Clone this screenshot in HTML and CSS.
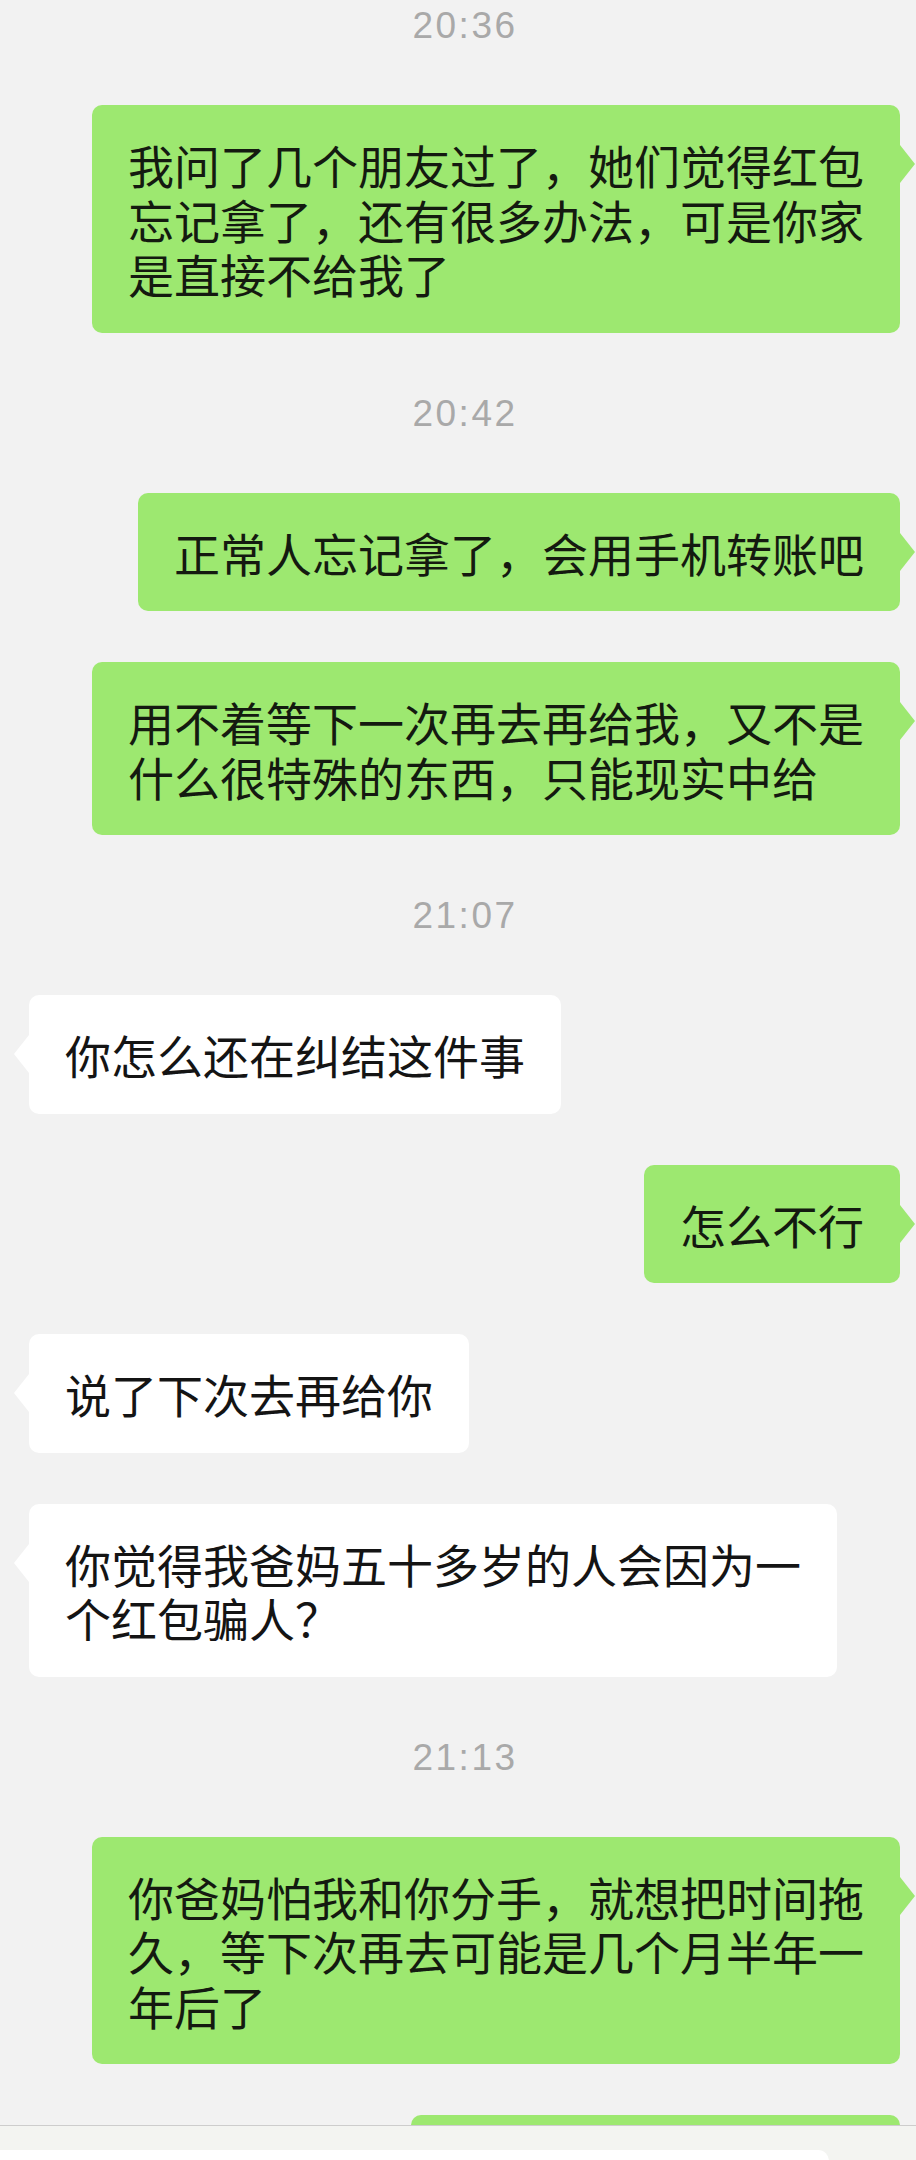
FILE: index.html
```html
<!DOCTYPE html>
<html lang="zh-CN">
<head>
    <meta charset="UTF-8">
    <meta name="viewport" content="width=device-width, initial-scale=1.0">
    <title>聊天</title>
    <link rel="stylesheet" href="styles.css">
</head>
<body>

    <div class="chat">
        <div class="time">20:36</div>
        <div class="row me">
            <div class="bubble">我问了几个朋友过了，她们觉得红包忘记拿了，还有很多办法，可是你家是直接不给我了</div>
        </div>

        <div class="time">20:42</div>
        <div class="row me">
            <div class="bubble">正常人忘记拿了，会用手机转账吧</div>
        </div>
        <div class="row me">
            <div class="bubble">用不着等下一次再去再给我，又不是什么很特殊的东西，只能现实中给</div>
        </div>

        <div class="time">21:07</div>
        <div class="row you">
            <div class="bubble">你怎么还在纠结这件事</div>
        </div>
        <div class="row me">
            <div class="bubble">怎么不行</div>
        </div>
        <div class="row you">
            <div class="bubble">说了下次去再给你</div>
        </div>
        <div class="row you">
            <div class="bubble">你觉得我爸妈五十多岁的人会因为一个红包骗人？</div>
        </div>

        <div class="time">21:13</div>
        <div class="row me">
            <div class="bubble">你爸妈怕我和你分手，就想把时间拖久，等下次再去可能是几个月半年一年后了</div>
        </div>
        <div class="row me">
            <div class="bubble cut"></div>
        </div>
    </div>

    <!-- 输入栏 -->
    <div class="bar">
        <div class="input"></div>
    </div>

</body>
</html>
```

FILE: styles.css
```css
body {
    margin: 0;
    background-color: #f2f2f2;
    font-family: "Noto Sans CJK SC", sans-serif;
}
.chat {
    display: flex;
    flex-direction: column;
    gap: 51px;
    height: 2125px;
    overflow: hidden;
    box-sizing: border-box;
}
.time {
    margin: 12px 0 10px;
    padding-left: 14px;
    font-family: "Liberation Sans", Arial, sans-serif;
    font-size: 37px;
    line-height: 36px;
    letter-spacing: 2.5px;
    color: #a9a9a9;
    text-align: center;
}
.time:first-child {
    margin-top: 8px;
}
.row {
    display: flex;
}
.me {
    justify-content: flex-end;
    padding-right: 16px;
}
.you {
    justify-content: flex-start;
    padding-left: 29px;
}
.bubble {
    position: relative;
    max-width: 736px;
    padding: 32px 36px;
    font-size: 46px;
    line-height: 54.5px;
    color: #141a10;
    border-radius: 10px;
    word-break: break-all;
}
.me .bubble {
    background-color: #9de870;
}
.you .bubble {
    background-color: #fff;
    color: #141414;
}
.me .bubble::after {
    content: "";
    position: absolute;
    left: 100%;
    top: 40px;
    border-top: 19px solid transparent;
    border-bottom: 19px solid transparent;
    border-left: 15px solid #9de870;
}
.you .bubble::before {
    content: "";
    position: absolute;
    right: 100%;
    top: 40px;
    border-top: 19px solid transparent;
    border-bottom: 19px solid transparent;
    border-right: 15px solid #fff;
}
.cut {
    width: 417px;
    height: 54px;
}
.bar {
    height: 35px;
    padding-top: 24px;
    box-sizing: border-box;
    border-top: 1px solid #cdcdcd;
    background-color: #f3f4f1;
    overflow: hidden;
}
.input {
    width: 829px;
    height: 40px;
    background-color: #fff;
    border-radius: 0 11px 0 0;
}
```
